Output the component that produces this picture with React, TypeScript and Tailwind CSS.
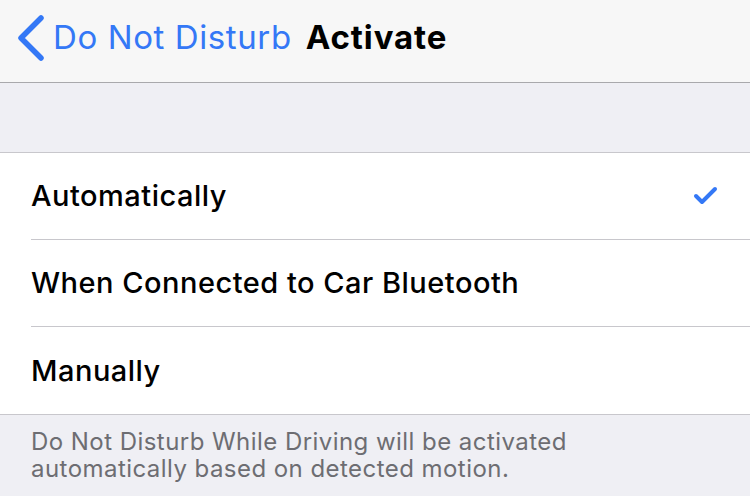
import React from "react";

const font = { fontFamily: "Inter, 'Noto Sans', sans-serif" };

interface Option {
  label: string;
  checked: boolean;
}

const options: Option[] = [
  { label: "Automatically", checked: true },
  { label: "When Connected to Car Bluetooth", checked: false },
  { label: "Manually", checked: false },
];

function Chevron() {
  return (
    <svg width="30" height="46" viewBox="0 0 30 46" className="shrink-0">
      <path
        d="M25 3 L5 23 L25 43"
        fill="none"
        stroke="#3478f6"
        strokeWidth="5.5"
        strokeLinecap="round"
        strokeLinejoin="round"
      />
    </svg>
  );
}

function Check() {
  return (
    <svg width="26" height="22" viewBox="0 0 26 22">
      <path
        d="M3 11 L9 17 L22 4"
        fill="none"
        stroke="#3478f6"
        strokeWidth="4"
        strokeLinecap="round"
        strokeLinejoin="round"
      />
    </svg>
  );
}

export default function App() {
  return (
    <div className="w-[750px] h-[496px] overflow-hidden bg-[#efeff4]" style={font}>
      {/* nav bar */}
      <div className="h-[83px] bg-[#f7f7f7] border-b border-[#a9a9ac] flex items-center pl-[16px] pb-[6px]">
        <Chevron />
        <span className="ml-[7px] text-[33px] text-[#3478f6] tracking-[0.6px]">Do Not Disturb</span>
        <span className="ml-[14px] text-[33px] font-bold text-black tracking-[0.9px]">Activate</span>
      </div>

      {/* spacer */}
      <div className="h-[70px] border-b border-[#c8c7cc]" />

      {/* options */}
      <div className="bg-white border-b border-[#c8c7cc]">
        {options.map((opt, i) => (
          <div key={opt.label} className="pl-[31px]">
            <div
              className={
                "h-[87px] flex items-center justify-between pr-[31px] " +
                (i < options.length - 1 ? "border-b border-[#c8c7cc]" : "")
              }
            >
              <span className="text-[29px] font-medium text-black tracking-[0.5px]">{opt.label}</span>
              {opt.checked && <Check />}
            </div>
          </div>
        ))}
      </div>

      {/* footer */}
      <div className="px-[31px] pt-[13px] text-[24px] leading-[27px] text-[#6d6d72] tracking-[0.45px]">
        Do Not Disturb While Driving will be activated
        <br />
        automatically based on detected motion.
      </div>
    </div>
  );
}
